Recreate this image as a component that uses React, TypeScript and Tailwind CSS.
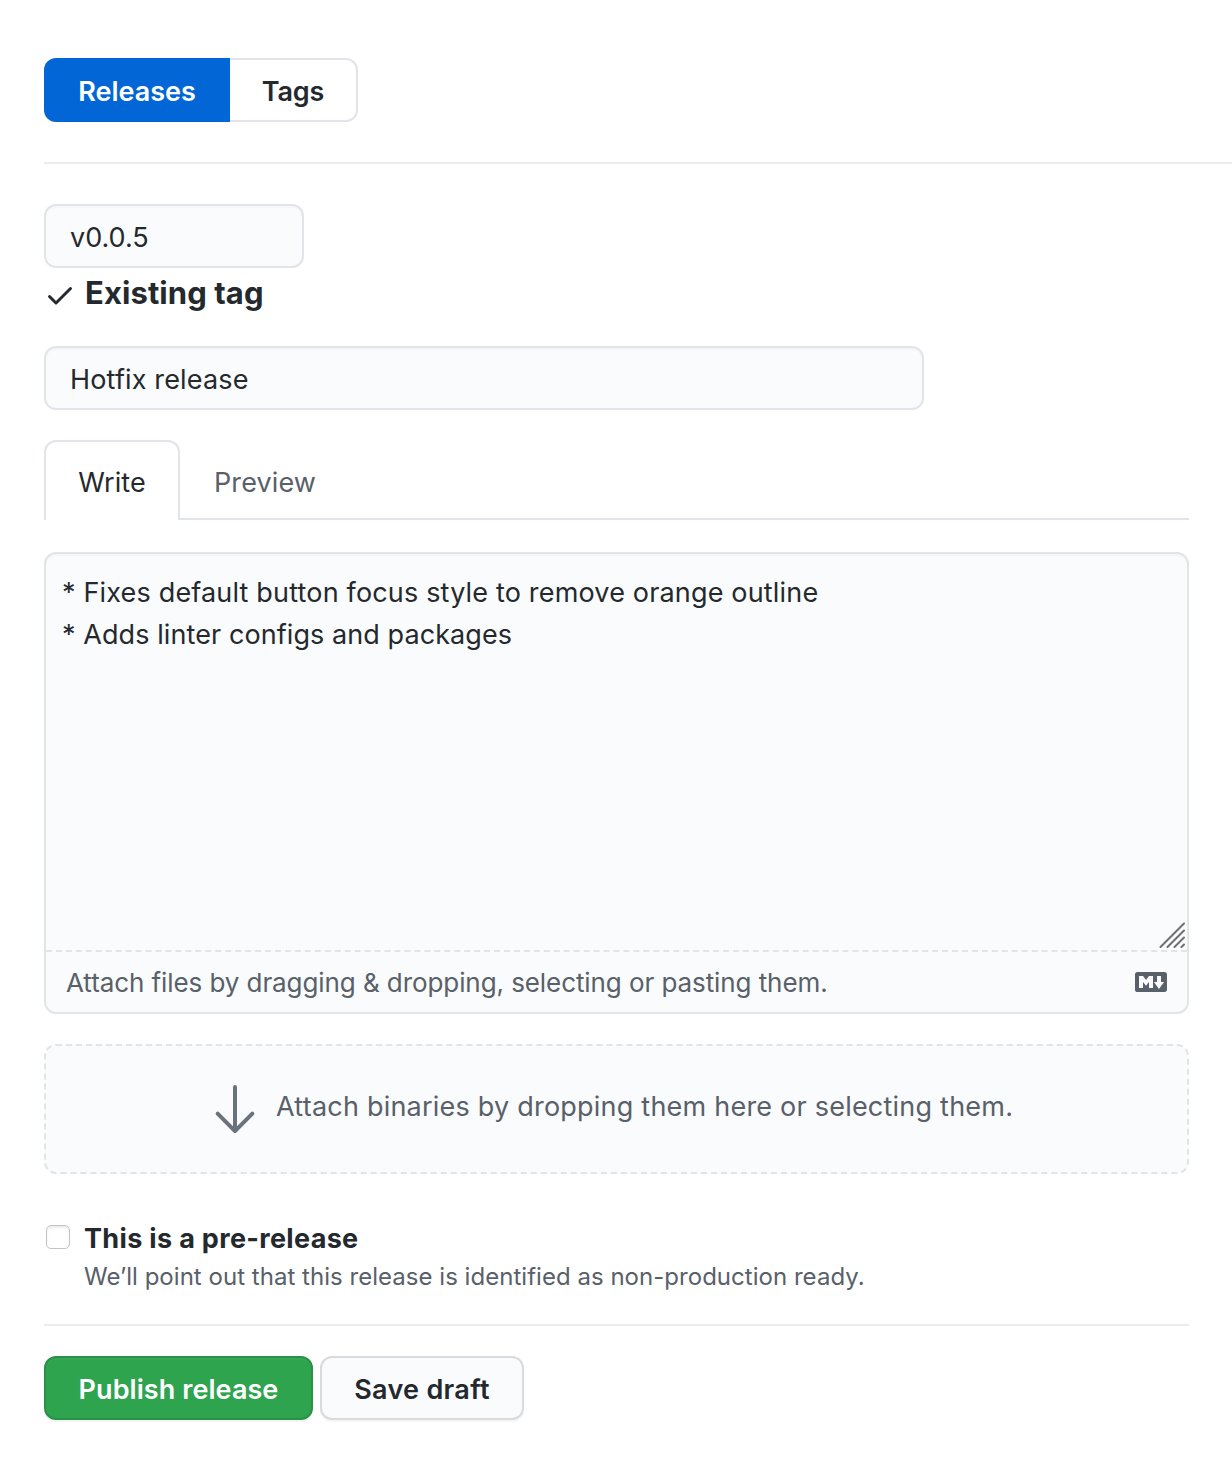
import React from "react";

const field =
  "block h-16 rounded-xl border-2 border-[#e1e4e8] bg-[#fafbfc] px-6 pt-0.5 text-[27px] text-[#24292e] shadow-[inset_0_2px_0_rgba(225,228,232,0.2)] outline-none";

function CheckIcon() {
  return (
    <svg viewBox="0 0 16 16" className="mt-1 h-8 w-8 shrink-0" fill="#24292e">
      <path
        fillRule="evenodd"
        d="M13.78 4.22a.75.75 0 010 1.06l-7.25 7.25a.75.75 0 01-1.06 0L2.22 9.28a.75.75 0 011.06-1.06L6 10.94l6.72-6.72a.75.75 0 011.06 0z"
      />
    </svg>
  );
}

function MarkdownIcon() {
  return (
    <svg viewBox="0 0 16 16" className="h-8 w-8 shrink-0" fill="#586069">
      <path
        fillRule="evenodd"
        d="M14.85 3H1.15C.52 3 0 3.52 0 4.15v7.69C0 12.48.52 13 1.15 13h13.69c.64 0 1.15-.52 1.15-1.15v-7.7C16 3.52 15.48 3 14.85 3zM9 11H7V8L5.5 9.92 4 8v3H2V5h2l1.5 2L7 5h2v6zm2.99.5L9.5 8H11V5h2v3h1.5l-2.51 3.5z"
      />
    </svg>
  );
}

function ArrowDownIcon() {
  return (
    <svg viewBox="0 0 24 24" className="mt-px h-16 w-16" fill="#6a737d">
      <path
        fillRule="evenodd"
        d="M4.97 13.22a.75.75 0 000 1.06l6.5 6.5a.75.75 0 001.06 0l6.5-6.5a.75.75 0 10-1.06-1.06l-5.22 5.22V3.75a.75.75 0 00-1.5 0v14.69l-5.22-5.22a.75.75 0 00-1.06 0z"
      />
    </svg>
  );
}

function ResizeGrip() {
  return (
    <svg
      viewBox="0 0 26 26"
      className="pointer-events-none absolute right-0.5 bottom-0.5 h-[26px] w-[26px]"
      fill="none"
      stroke="#6f7072"
      strokeWidth="2"
      strokeLinecap="round"
    >
      <path d="M1.5 25L25 1.5M8.5 25L25 8.5M15.5 25L25 15.5M22.5 25L25 22.5" />
    </svg>
  );
}

export default function App() {
  return (
    <main className="h-[1458px] w-[1232px] overflow-hidden bg-white pt-[58px] pl-11 font-['Inter',sans-serif] text-[27px] leading-[42px] text-[#24292e]">
      <nav className="flex h-16 font-semibold">
        <button className="flex w-[186px] items-center justify-center rounded-l-xl bg-[#0366d6] pt-1 text-white">
          <span>Releases</span>
        </button>
        <button className="flex w-32 items-center justify-center rounded-r-xl border-2 border-l-0 border-[#e1e4e8] pt-1">
          <span className="tracking-[-0.2px]">Tags</span>
        </button>
      </nav>
      <div className="mt-10 h-0.5 bg-[#eaecef]" />

      <form className="mt-10 w-[1145px]" onSubmit={(e) => e.preventDefault()}>
        <input className={`${field} w-[260px]`} defaultValue="v0.0.5" aria-label="Tag" />
        <div className="flex h-[50px] items-center gap-[9px]">
          <CheckIcon />
          <span className="text-[31px] font-bold tracking-[0.08px]">Existing tag</span>
        </div>
        <input
          className={`${field} mt-7 w-[880px] tracking-[0.15px]`}
          defaultValue="Hotfix release"
          aria-label="Release title"
        />

        <div className="mt-[30px] flex h-20">
          <button className="w-[136px] rounded-t-xl border-2 border-b-0 border-[#e1e4e8] pt-1">
            <span className="tracking-[0.1px]">Write</span>
          </button>
          <div className="flex flex-1 items-center border-b-2 border-[#e1e4e8] pt-2 pl-[34px] text-[#586069]">
            <span className="tracking-[0.1px]">Preview</span>
          </div>
        </div>

        <section className="mt-8 h-[462px] rounded-xl border-2 border-[#e1e4e8] bg-[#fafbfc] shadow-[inset_0_2px_0_rgba(225,228,232,0.2)]">
          <div className="relative h-[396px] px-4 pt-[18px]">
            <p>
              <span className="tracking-[0.17px]">* Fixes default button focus style to remove orange outline</span>
            </p>
            <p>
              <span className="tracking-[0.08px]">* Adds linter configs and packages</span>
            </p>
            <ResizeGrip />
          </div>
          <div className="flex h-[62px] items-center justify-between border-t-2 border-dashed border-[#e1e4e8] pr-5 pl-5 text-[#586069]">
            <span className="pt-px text-[26px] tracking-[-0.08px]">
              Attach files by dragging &amp; dropping, selecting or pasting them.
            </span>
            <MarkdownIcon />
          </div>
        </section>

        <section className="mt-[30px] flex h-[130px] rounded-xl border-2 border-dashed border-[#e1e4e8] bg-[#fafbfc] pt-[30px] pl-[157px] text-[#586069]">
          <ArrowDownIcon />
          <span className="mt-2.5 ml-[9px] tracking-[0.22px] whitespace-nowrap">
            Attach binaries by dropping them here or selecting them.
          </span>
        </section>

        <div className="mt-[43px] flex gap-[14px] pl-0.5">
          <div className="mt-2 h-6 w-6 shrink-0 rounded-[5px] border border-[#c4c4c4] bg-white shadow-[inset_0_2px_2px_rgba(0,0,0,0.08)]" />
          <div>
            <p className="h-[42px] pt-px font-bold">
              <span className="tracking-[0.33px]">This is a pre-release</span>
            </p>
            <p className="text-2xl leading-9 text-[#586069]">
              <span className="tracking-[0.03px]">
                We’ll point out that this release is identified as non-production ready.
              </span>
            </p>
          </div>
        </div>

        <div className="mt-[29px] h-0.5 bg-[#eaecef]" />
        <div className="mt-[30px] flex h-16 gap-[7px] font-semibold">
          <button className="w-[269px] rounded-xl border-2 border-[#2a9147] bg-[#2ea44f] pt-1 text-white shadow-[0_2px_0_rgba(27,31,35,0.05),inset_0_2px_0_rgba(255,255,255,0.03)]">
            <span className="tracking-[0.07px]">Publish release</span>
          </button>
          <button className="w-[204px] rounded-xl border-2 border-[#d9dadc] bg-[#fafbfc] pt-1 shadow-[0_2px_0_rgba(27,31,35,0.04)]">
            <span className="tracking-[0.3px]">Save draft</span>
          </button>
        </div>
      </form>
    </main>
  );
}
